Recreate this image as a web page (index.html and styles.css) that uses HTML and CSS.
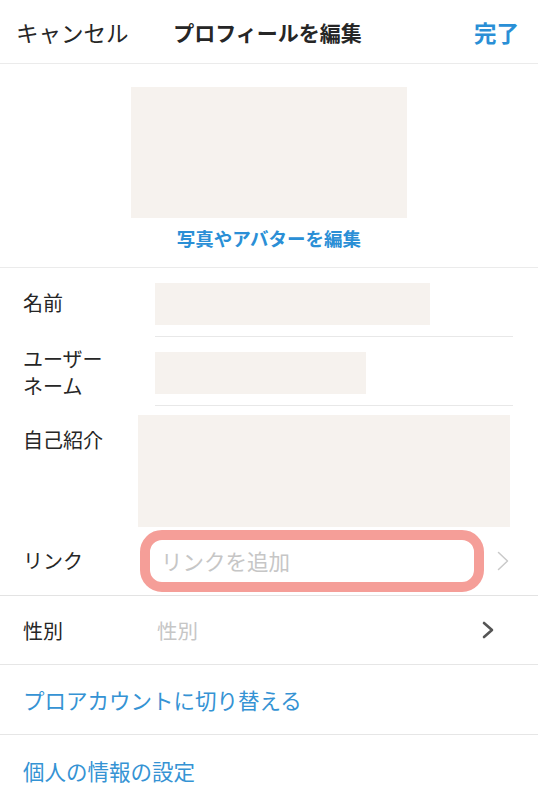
FILE: index.html
```html
<!DOCTYPE html>
<html lang="ja">

<head>
    <meta charset="UTF-8">
    <meta name="viewport" content="width=device-width, initial-scale=1.0">
    <title>プロフィールを編集</title>
    <link rel="stylesheet" href="styles.css">
</head>

<body>
    <div class="screen">
        <header class="topbar">
            <span class="cancel">キャンセル</span>
            <span class="title">プロフィールを編集</span>
            <span class="done">完了</span>
        </header>

        <section class="avatar">
            <div class="avatar-box"></div>
            <p class="avatar-edit">写真やアバターを編集</p>
        </section>

        <section class="form">
            <div class="row">
                <div class="label">名前</div>
                <div class="field line">
                    <div class="blank blank-name"></div>
                </div>
            </div>

            <div class="row">
                <div class="label">ユーザー<br>ネーム</div>
                <div class="field line">
                    <div class="blank blank-user"></div>
                </div>
            </div>

            <div class="row row-bio">
                <div class="label">自己紹介</div>
                <div class="field bio">
                    <div class="blank blank-bio"></div>
                </div>
            </div>

            <div class="row row-link">
                <div class="label">リンク</div>
                <div class="link-input">リンクを追加</div>
                <svg class="chev chev-light" width="12" height="20" viewBox="0 0 12 20">
                    <polyline points="1.5,1.5 10.5,10 1.5,18.5" fill="none" stroke="#c9c9c9" stroke-width="1.5"
                        stroke-linecap="round" stroke-linejoin="round" />
                </svg>
            </div>

            <div class="row row-gender">
                <div class="label">性別</div>
                <div class="placeholder">性別</div>
                <svg class="chev chev-dark" width="12" height="18" viewBox="0 0 12 18">
                    <polyline points="2,2 10,9 2,16" fill="none" stroke="#555" stroke-width="2.6"
                        stroke-linecap="round" stroke-linejoin="round" />
                </svg>
            </div>

            <div class="row row-action">
                <span class="action">プロアカウントに切り替える</span>
            </div>

            <div class="row row-action last">
                <span class="action">個人の情報の設定</span>
            </div>
        </section>
    </div>
</body>

</html>
```

FILE: styles.css
```css
* {
    padding: 0;
    margin: 0;
    box-sizing: border-box;
}

body {
    background: #ffffff;
    font-family: "Noto Sans CJK JP", "Noto Sans", sans-serif;
    color: #262626;
}

.screen {
    width: 538px;
    height: 800px;
    overflow: hidden;
}

/* top bar */
.topbar {
    height: 64px;
    display: grid;
    grid-template-columns: 1fr auto 1fr;
    align-items: center;
    border-bottom: 1px solid #ebebeb;
    padding: 0 19px 0 16px;
}

.cancel {
    font-size: 22.5px;
    color: #262626;
}

.title {
    font-size: 21px;
    font-weight: 700;
}

.done {
    justify-self: end;
    font-size: 22.5px;
    font-weight: 700;
    color: #2a8fd6;
}

/* avatar */
.avatar {
    display: flex;
    flex-direction: column;
    align-items: center;
    padding-top: 23px;
    padding-bottom: 16px;
    border-bottom: 1px solid #ebebeb;
}

.avatar-box {
    width: 276px;
    height: 131px;
    background: #f6f2ee;
}

.avatar-edit {
    margin-top: 7px;
    line-height: 26px;
    font-size: 18.5px;
    font-weight: 700;
    color: #2a8fd6;
}

/* rows */
.row {
    display: flex;
    align-items: center;
}

.label {
    width: 138px;
    flex-shrink: 0;
    padding-left: 23px;
    font-size: 20px;
    line-height: 27px;
}

.field.line {
    flex: 1;
    margin-left: 17px;
    margin-right: 25px;
    padding: 15px 0 11px;
    border-bottom: 1px solid #e8e8e8;
}

.blank {
    background: #f6f2ee;
}

.blank-name {
    width: 275px;
    height: 42px;
}

.blank-user {
    width: 211px;
    height: 42px;
}

.row-bio {
    align-items: flex-start;
}

.row-bio .label {
    padding-top: 20px;
}

.field.bio {
    flex: 1;
    margin-right: 28px;
    padding-top: 9px;
}

.blank-bio {
    height: 112px;
}

.row-link {
    height: 69px;
    border-bottom: 1px solid #e3e3e3;
    padding-bottom: 1px;
}

.link-input {
    width: 344px;
    height: 62px;
    margin-left: 2px;
    border: 10px solid #f59e98;
    border-radius: 22px;
    padding-left: 11px;
    display: flex;
    align-items: center;
    font-size: 21.5px;
    color: #c6c6c6;
}

.chev-light {
    margin-left: 13px;
}

.row-gender {
    height: 69px;
    border-bottom: 1px solid #e6e6e6;
}

.placeholder {
    flex: 1;
    padding-left: 19px;
    font-size: 20.5px;
    color: #c6c6c6;
}

.chev-dark {
    margin-right: 44px;
}

.row-action {
    height: 70px;
    padding-left: 23px;
    border-bottom: 1px solid #e6e6e6;
}

.row-action.last {
    border-bottom: none;
}

.action {
    font-size: 21.5px;
    color: #3593d4;
}
```
